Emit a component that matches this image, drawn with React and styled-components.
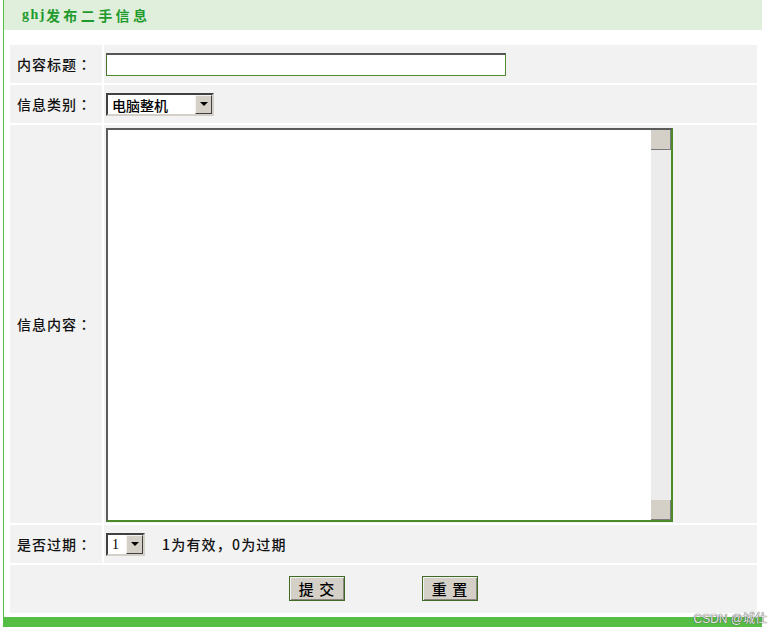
import React from "react"
import styled, { createGlobalStyle } from "styled-components"

const Global = createGlobalStyle`
  body {
    margin: 0;
    background: #fff;
    font-family: "Noto Sans CJK SC", "Noto Sans", sans-serif;
  }
`

const Page = styled.div`
  position: relative;
  width: 758px;
  margin-left: 3px;
  border-left: 1px solid #56be45;
  border-bottom: 10px solid #56be45;
`

const Header = styled.div`
  height: 30px;
  display: flex;
  align-items: center;
  padding-left: 18px;
  background: #dfefdc;
  color: #1f9a2c;
  font-size: 14px;
  font-weight: bold;
  letter-spacing: 3.4px;
  span {
    font-family: "Liberation Serif", serif;
    letter-spacing: 1.5px;
  }
`

const Form = styled.div`
  display: grid;
  grid-template-columns: 92px 1fr;
  grid-template-rows: 38px 38px 398px 38px 48px;
  gap: 2px;
  margin: 15px 5px 4px 6px;
`

const Label = styled.div`
  display: flex;
  align-items: center;
  padding-left: 7px;
  background: #f2f2f2;
  color: #111;
  font-family: "Noto Sans CJK TC", "Noto Sans CJK SC", sans-serif;
  font-size: 14px;
  font-weight: 500;
  letter-spacing: 1px;
`

const Cell = styled.div`
  display: flex;
  align-items: ${(p) => (p.$top ? "flex-start" : "center")};
  padding: ${(p) => (p.$top ? "3px 0 0 2px" : "0 0 0 2px")};
  background: #f2f2f2;
  font-size: 14px;
  color: #222;
`

const Actions = styled.div`
  grid-column: 1 / 3;
  display: flex;
  justify-content: center;
  align-items: center;
  gap: 77px;
  padding-bottom: 2px;
  background: #f2f2f2;
`

const TextInput = styled.input`
  box-sizing: border-box;
  width: 400px;
  height: 23px;
  margin: 0;
  background: #fff;
  border: 1px solid #4f8a2c;
  border-top: 2px solid #555;
  border-left-color: #4a6e30;
  outline: none;
`

const Dropdown = styled.div`
  position: relative;
  width: ${(p) => p.$width}px;
  height: 23px;
`

const Select = styled.select`
  appearance: none;
  box-sizing: border-box;
  width: 100%;
  height: 100%;
  margin: 0;
  padding: 0 0 0 4px;
  background: #fff;
  border: 2px solid;
  border-color: #404040 #d4d0c8 #d4d0c8 #404040;
  border-radius: 0;
  font-family: ${(p) => (p.$serif ? '"Liberation Serif", serif' : '"Noto Sans CJK SC", sans-serif')};
  font-size: 14px;
  font-weight: 500;
  color: #000;
  outline: none;
`

const Arrow = styled.span`
  position: absolute;
  top: 2px;
  right: 2px;
  width: 17px;
  height: 19px;
  box-sizing: border-box;
  display: flex;
  align-items: center;
  justify-content: center;
  background: #d4d0c8;
  border: 1px solid;
  border-color: #f4f2ee #404040 #404040 #f4f2ee;
  pointer-events: none;
  &::after {
    content: "";
    border-left: 4px solid transparent;
    border-right: 4px solid transparent;
    border-top: 4px solid #000;
  }
`

const Hint = styled.span`
  margin-left: 17px;
  font-size: 14px;
  font-weight: 500;
  letter-spacing: 1.2px;
  color: #111;
`

const TextBox = styled.div`
  box-sizing: border-box;
  display: flex;
  width: 567px;
  height: 394px;
  background: #fff;
  border: 2px solid;
  border-color: #5a5a5a #4d8a2a #4d8a2a #5a5a5a;
`

const Content = styled.textarea`
  flex: 1;
  margin: 0;
  padding: 2px;
  resize: none;
  border: none;
  background: #fff;
  outline: none;
`

const ScrollBar = styled.div`
  display: flex;
  flex-direction: column;
  width: 20px;
  background: #ececec;
`

const ScrollButton = styled.div`
  height: 20px;
  box-sizing: border-box;
  background: #d4d0c8;
  border-right: 1px solid #7a7a7a;
  border-bottom: 1px solid #7a7a7a;
`

const Track = styled.div`
  flex: 1;
`

const Button = styled.button`
  box-sizing: border-box;
  width: 56px;
  height: 25px;
  padding: 0;
  background: #d4d0c8;
  border: 1px solid #3f6a25;
  box-shadow: inset 1px 1px 0 #f4f2ee, inset -1px -1px 0 #8a877f;
  font-family: "Noto Sans CJK SC", sans-serif;
  font-size: 15px;
  font-weight: 500;
  color: #000;
  letter-spacing: 1px;
`

const Watermark = styled.div`
  position: absolute;
  right: -5px;
  bottom: -9px;
  white-space: nowrap;
  font-family: "Liberation Sans", "Noto Sans CJK SC", sans-serif;
  font-size: 12px;
  color: #e8e8e8;
  text-shadow: 0 0 1px #555, 0 0 1px #555;
`

export default function App() {
  return (
    <>
      <Global />
      <Page>
        <Header>
          <span>ghj</span>发布二手信息
        </Header>
        <Form>
          <Label>内容标题：</Label>
          <Cell>
            <TextInput type="text" />
          </Cell>

          <Label>信息类别：</Label>
          <Cell>
            <Dropdown $width={108}>
              <Select defaultValue="pc">
                <option value="pc">电脑整机</option>
              </Select>
              <Arrow />
            </Dropdown>
          </Cell>

          <Label>信息内容：</Label>
          <Cell $top>
            <TextBox>
              <Content />
              <ScrollBar>
                <ScrollButton />
                <Track />
                <ScrollButton />
              </ScrollBar>
            </TextBox>
          </Cell>

          <Label>是否过期：</Label>
          <Cell>
            <Dropdown $width={39}>
              <Select $serif defaultValue="1">
                <option value="1">1</option>
                <option value="0">0</option>
              </Select>
              <Arrow />
            </Dropdown>
            <Hint>1为有效，0为过期</Hint>
          </Cell>

          <Actions>
            <Button type="submit">提 交</Button>
            <Button type="reset">重 置</Button>
          </Actions>
        </Form>
        <Watermark>CSDN @城仕</Watermark>
      </Page>
    </>
  )
}
